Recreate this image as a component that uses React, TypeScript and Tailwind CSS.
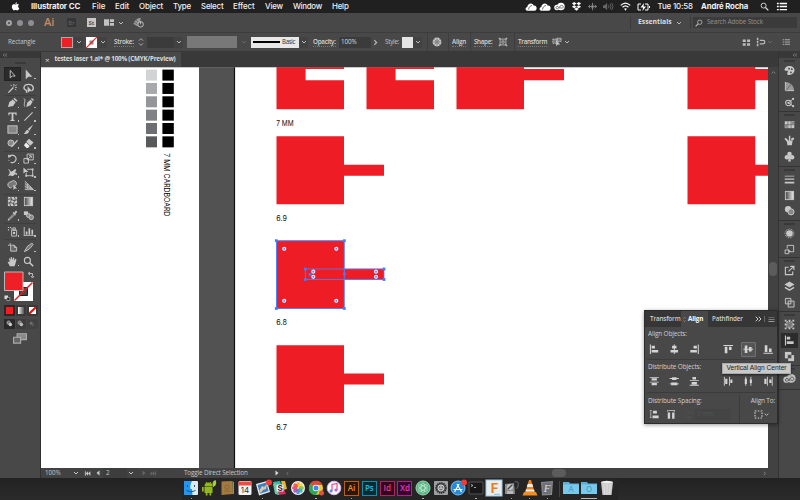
import React from "react";

const ui = "font-['Open_Sans','Noto_Sans',sans-serif]";

const glyphs: Record<string, React.ReactNode> = {
  select: <path d="M3.5 1.5v8.2l2.2-2h3.2z" fill="none" stroke="currentColor" />,
  direct: <path d="M3 .5v10.6l2.9-2.700h4.300z" />,
  wand: <><path d="M1.5 10.5L7 5" stroke="currentColor" strokeWidth="1.5" /><path d="M7.5 1v3M10.8 5h-2M4 2l1.2 1.4M9 3.4l1.5-1.6M8.8 6.5l1.3 1.4" stroke="currentColor" /></>,
  lasso: <><path d="M4 8C-.5 7.500.3 1.500 6 1.500s6.500 5 3.500 7M3 7.500c1.500.5 1 2 .5 3" fill="none" stroke="currentColor" strokeWidth="1.500" /><path d="M5 3.500V11l2-2h3z" /></>,
  pen: <><path d="M1 11l1.600-5.500L6.400 2.700l3 3-2.700 4z" /><path d="M7 2l1.300-1.300L11.500 4l-1.300 1.200z" /></>,
  curve: <><path d="M3.500 11l1.200-5 3.500-3 2.300 2.300-2.300 3.700zM8.700 2.200l1-1.200L12 3.400l-1 1z" /><path d="M1 1.500c3 2-1 6 1 9" fill="none" stroke="currentColor" /></>,
  type: <path d="M1.500 1.500h9v3h-1L9 2.900H7v6.600l1.300.4v.9H3.700v-.9L5 9.500V2.900H3l-.5 1.600h-1z" />,
  line: <path d="M1.500 10.500l9-9" stroke="currentColor" strokeWidth="1.200" />,
  rect: <rect x="1" y="2" width="10" height="8" fill="#858585" stroke="currentColor" />,
  brush: <><path d="M11.200.6L5.300 5.500l1.700 1.800z" /><path d="M5 6.200l1.600 1.600C6 11 3.500 10.800.8 10.800 3 9 2.500 7 5 6.200z" /></>,
  shaper: <><circle cx="4.300" cy="5.500" r="3.300" fill="#8a8a8a" stroke="currentColor" /><path d="M5 8.500L11 2l1 1-6 6.500-1.800.6z" /></>,
  eraser: <><path d="M6.500.8l5 4L8 8.500 3.500 4.200z" /><path d="M3.300 5l4 3.700-1.800 2.100H3.800L1 8z" fill="#eee" /></>,
  rotate: <><path d="M3 3.500a4 4 0 1 1 1 6.500" fill="none" stroke="currentColor" strokeWidth="1.300" /><path d="M1 1.500l.5 4 3.300-2z" /><path d="M2 7.500l.2 1" stroke="currentColor" strokeDasharray="1 1" /></>,
  scale: <><path d="M1 6h5v5H1zM4.500 1.200h6.700v6.300H4.500z" fill="none" stroke="currentColor" /><path d="M5 7.200l4-4M6.500 3H9v2.500" fill="none" stroke="currentColor" /></>,
  width: <path d="M1 2.500c3-1 2 3 4 2.500 2-.6 3-3 4.500-2.500C11 3 9 5 8.500 6c2 0 3 1 2.500 3-1.500-2-3-.5-4 .5C5 11 4 8 1 10l2-3.500C2.500 5 3 4 1 2.500z" />,
  transform: <><path d="M4.500 2.500h6v7h-7V6" fill="none" stroke="currentColor" /><path d="M.5.500v6.500l2-1.500h3.500zM9.500 1.500h2v2h-2zM9.500 8.500h2v2h-2zM2.500 8.500h2v2h-2z" /></>,
  shape: <><path d="M5 8.500A3.300 3.300 0 1 1 4.500 2a3.200 3.200 0 1 1 3.400 5" fill="#777" stroke="currentColor" /><path d="M7 5v6l1.700-1.700h2.300z" /></>,
  perspective: <><path d="M2 1l9 8.500v1H2z" fill="#777" /><path d="M2 1l9.500 9.500H2M2 4l9 6.500M2 7l9 3.500M5 4v6M8 7v3" fill="none" stroke="currentColor" strokeWidth=".8" /></>,
  mesh: <><path d="M1 1h10v10H1z" /><path d="M1 4c3-3 5 3 10 0M1 8c4-3 6 3 10 0M4 1c3 4-3 6 0 10M8 1c3 4-3 6 0 10" fill="none" stroke="#454545" /></>,
  gradient: <><defs><linearGradient id="grey"><stop stopColor="#444" /><stop offset="1" stopColor="#eee" /></linearGradient></defs><rect x="1.500" y="1.500" width="9" height="9" fill="url(#grey)" stroke="currentColor" /></>,
  dropper: <><path d="M7 4.500l-5 5-.8 1.700L3 10.500l5-5" fill="none" stroke="currentColor" /><path d="M6 3l1-.8 1 .8 1-1.700c1.300-1 2.500.2 1.600 1.600L9 4.300l.8.800-1 1z" /></>,
  blend: <><rect x="1" y="1.500" width="4.500" height="4" /><circle cx="6" cy="6" r="2.200" fill="#888" stroke="currentColor" /><circle cx="9" cy="8" r="2.500" fill="#888" stroke="currentColor" /></>,
  spray: <><path d="M5 4.500h5.500V11H5zM6.500 2h2.600v2.500H6.500z" fill="none" stroke="currentColor" /><circle cx="7.700" cy="7.600" r="1.400" /><path d="M1 1h1.300v1.300H1zM3.300 1h1.300v1.300H3.300zM1 3.600h1.300v1.300H1zM4 2.600h2v1H4z" /></>,
  graph: <path d="M.8 1h1v9h10v1H.8zM3 6h1.800v3.500H3zM6 2.500h1.800v7H6zM9.200 4H11v5.500H9.200z" />,
  artboard: <path d="M3.500 1v3M1 3.500h2M4 3.500h4l2.500 2.500v4H4zM8 3.500V6h2.500" fill="#666" stroke="currentColor" />,
  slice: <path d="M9.500 1L11 2.800 8 6.500 6.500 8 1.500 10.500 5 4.500 7.500 3z" fill="#777" stroke="currentColor" />,
  hand: <path d="M3 11.300C2.500 8.800.6 7.700.8 6.300c.9-.5 1.500.3 2.100.9L2.200 2.800c1-.7 1.500.2 1.900 2.700L4 1.500c1-.9 1.800 0 1.800 3.500L6.600 1.700c1.200-.5 1.600.3 1.200 3.600L9.200 3c1-.2 1.200.7 1 1.500L9 9l-.8 2.300z" />,
  zoom: <><circle cx="4.800" cy="4.800" r="3.300" fill="none" stroke="currentColor" strokeWidth="1.200" /><path d="M7.300 7.300l3.800 3.900" stroke="currentColor" strokeWidth="1.700" /></>,
  palette: <path fillRule="evenodd" d="M6.500 1.200C3 1 .3 3.500.7 5.700c.5 1.500 2.900 0 3.500.9.600 1-1.700 2.600-.2 3.900C7 12 11.800 9 11.500 5.200 11 2.500 8.500 1.300 6.500 1.200zM5.500 3a1 1 0 1 1 0 2 1 1 0 0 1 0-2zM8.500 3.500a1 1 0 1 1 0 2 1 1 0 0 1 0-2zM7.500 7a1 1 0 1 1 0 2 1 1 0 0 1 0-2z" />,
  guide: <><path d="M1.500 1c5 0 9.500 4 9.500 9.500H1.500z" fill="#999" /><path d="M1.500 1v9.500H11" fill="none" stroke="currentColor" /><path d="M2 10.500l6-7" stroke="#666" /></>,
  themes: <><circle cx="4.800" cy="6.500" r="3" fill="none" stroke="currentColor" strokeWidth="1.200" /><path d="M4.800 6.500L10 2M4.800 6.500L10 10" stroke="currentColor" /><circle cx="10" cy="2" r="1.200" /><circle cx="10" cy="10" r="1.200" /><circle cx="4.800" cy="6.500" r="1.200" /></>,
  swatches: <><path d="M.8 2.500h10.400v7.500H.8z" /><path d="M4.300 2.500V10M7.700 2.500V10M1 6.200h10" stroke="#555" strokeWidth=".7" /><path d="M8 3h3v3H8zM1 6.500h3v3H1z" fill="#888" /></>,
  brushes: <><path d="M3 6.200h6.300l-.7 5H3.700zM5.300.8h1.600v5.700H5.300zM7.500 4l3-1.500.5 2-2.500 2z" /><path d="M1.200 3.800l3.300 3.500" stroke="currentColor" strokeWidth="2" /></>,
  club: <><circle cx="6" cy="3.300" r="2.500" /><circle cx="3.200" cy="6.900" r="2.500" /><circle cx="8.800" cy="6.900" r="2.500" /><path d="M5.500 5h1l1 6.500h-3z" /></>,
  lines: <path d="M.8 2h10.400v.8H.8zM.8 5h10.400v1.300H.8zM.8 8.500h10.400v1.800H.8z" />,
  transparency: <><circle cx="4.500" cy="4.500" r="3.500" /><circle cx="7.700" cy="7.500" r="3.300" fill="#888" stroke="currentColor" /></>,
  appearance: <><circle cx="6" cy="6" r="3.600" /><circle cx="6" cy="6" r="4.800" fill="none" stroke="currentColor" strokeDasharray="1 1" /></>,
  styles: <><path d="M3.500 5V1.500h7v7H7" fill="none" stroke="currentColor" /><path d="M1.200 6.500h4v4h-4z" fill="none" stroke="currentColor" /><path d="M4 5.500l4 3-2.500.5z" /></>,
  exporting: <><path d="M5 2.500H1.500v8h8V7" fill="none" stroke="currentColor" strokeWidth="1.200" /><path d="M5 7l5-5M6.800 1.500h4v4" fill="none" stroke="currentColor" strokeWidth="1.300" /></>,
  layers: <><path d="M6 .5l5.500 3.200L6 7 .5 3.700z" /><path d="M1 7l5 3 5-3" fill="none" stroke="currentColor" strokeWidth="1.600" /></>,
  boards: <path d="M1.500 1.500h6v6h-6zM4.500 4.500H11V11H4.500z" fill="#555" stroke="currentColor" />,
  pathfinder: <><path d="M1 1h7v7H1z" /><path d="M4.500 4.500H11V11H4.500z" /><path d="M4.300 4.300h3.500v3.500H4.300z" fill="#484848" stroke="#777" strokeWidth=".6" /></>,
  bounds: <><path d="M3 3h6v6H3z" fill="#777" stroke="currentColor" strokeDasharray="1.500 1" /><path d="M.8.800h2v2h-2zM5 .8h2v2H5zM9.200.800h2v2h-2zM.8 5h2v2h-2zM9.200 5h2v2h-2zM.8 9.200h2v2h-2zM5 9.200h2v2H5zM9.200 9.200h2v2h-2z" /></>,
  left: <path d="M1 .5h1.200v11H1zM3 2h3.800v3H3zM3 6.800h7.500v3H3z" />,
  hcenter: <path d="M5.500.500h1.100v11H5.500zM3.500 2h5v3h-5zM1.800 6.800h8.500v3H1.800z" />,
  right: <path d="M10 .5h1.200v11H10zM5.200 2H9v3H5.200zM1.500 6.800H9v3H1.500z" />,
  top: <path d="M.5 1h11v1.200H.5zM2 3h3v7.500H2zM6.800 3h3v3.800h-3z" />,
  vcenter: <path d="M.5 5.500h11v1.100H.5zM2 1.800h3v8.500H2zM6.800 3.500h3v5h-3z" />,
  bottom: <path d="M.5 10h11v1.200H.5zM2 1.500h3V9H2zM6.800 5.200h3V9h-3z" />,
  dtop: <path d="M.8 1h10.400v1H.8zM3 2.500h6V5H3zM.8 6.500h10.400v1H.8zM3 8h6v2.500H3z" />,
  dmid: <path d="M3.500 1.300h5v3.200h-5zM.8 2.400h10.400v1H.8zM2.500 7.300h7v3.200h-7zM.8 8.500h10.400v1H.8z" />,
  dbot: <path d="M4 1.200h4V4H4zM.8 4.500h10.400v1H.8zM3 6.800h6v2.800H3zM.8 10h10.400v1H.8z" />,
  dleft: <path d="M1 .8h1v10.400H1zM2.500 3h2.500v6H2.500zM7 .8h1v10.400H7zM8.400 4h2.300v4H8.400z" />,
  dcent: <path d="M2.700.800h1v10.400h-1zM2 3h2.500v6H2zM8.500.800h1v10.400h-1zM7.800 4h2.400v4H7.800z" />,
  dright: <path d="M4.500.800h1v10.400h-1zM1.500 3H4v6H1.500zM10 .8h1v10.400h-1zM7.200 4h2.400v4H7.200z" />,
  vspace: <path d="M4.500 2H9v3H4.500zM4 7.500h7v3H4zM1 1.500h2v1H1zM1 9h2v1H1zM1.700 3h.8v6h-.8z" />,
  hspace: <path d="M2 4h2.700v7H2zM7 4h2.700v7H7zM1.500 1h1v2h-1zM9 1h1v2H9zM3 1.500h6v.8H3z" />,
  shapeprops: <><rect x="2.500" y="2.500" width="7" height="7" fill="#555" stroke="currentColor" /><path d="M1 1l2 2M11 1L9 3M1 11l2-2M11 11L9 9" stroke="currentColor" strokeWidth="1.500" /><circle cx="6" cy="6" r="1.500" fill="none" stroke="currentColor" /></>,
  globe: <><circle cx="6" cy="6" r="5.300" /><circle cx="6" cy="6" r="2.500" fill="none" stroke="#666" strokeWidth=".6" /><path d="M6 1v10M1 6h10M2.500 2.500l7 7M9.500 2.500l-7 7" stroke="#666" strokeWidth=".6" /></>,
  isolate: <><path d="M1 2.500h5v5H1zM6 1.500h5v4H6z" fill="#777" stroke="currentColor" strokeDasharray="2 .7" /><path d="M5 4v7l2-2h3z" /></>,
  grid: <path d="M1 2h4v3.300H1zM6.800 2h4v3.300h-4zM1 7h4v3.300H1zM6.800 7h4v3.300h-4z" />,
  snap: <><path d="M1 1h1.800v3H1zM1 4.800h1.800v2.700H1zM1 8.300h1.800V11H1z" /><path d="M4.500 4H8.500a2 2 0 0 1 0 4.200h-4" fill="none" stroke="currentColor" strokeWidth="1.500" /></>,
  rocket: <><path d="M.5 7.500C2 3 5 1 8.500 1L7 8 5 10z" fill="#999" /><path d="M1 5l4 3M3 3l4 4" stroke="#666" /><circle cx="8.300" cy="8" r="3" fill="#484848" stroke="currentColor" /><path d="M8.300 4.500V8" stroke="currentColor" /></>,
  cloud: <><path d="M2.500 9.800C-.2 9.500.2 6.300 2.300 6c.2-4 5.400-4.800 6.300-1.500 3.600-.4 4.200 4.700.8 5.300z" /><path d="M3.500 8.500C4 6 5 5 7 4.500" fill="none" stroke="#333" strokeWidth=".7" /></>,
  cc: <><circle cx="7.600" cy="5.900" r="4.100" /><circle cx="3.200" cy="7.100" r="2.900" /><path d="M6.800 8.400L4.700 6.300C3.300 5.200 1.600 6.800 2.300 7.900c.8 1.100 2.200.6 3-.4L7 5.300C8.300 3.900 10.600 5.100 10 6.900 9.300 8.500 7.900 7.900 6.900 6.700" fill="none" stroke="#444" strokeWidth=".8" /></>,
  dropbox: <path d="M3.500 1L6 2.700 3.500 4.500 1 2.700zM8.500 1L11 2.700 8.500 4.500 6 2.700zM1 6.200l2.500-1.700L6 6.200 3.500 8zM6 6.200l2.500-1.700L11 6.200 8.500 8zM3.500 8.600L6 7l2.500 1.600L6 10.500z" />,
  sync: <><path d="M.5 6h11M3 3.500L.5 6 3 8.500M9 3.500L11.500 6 9 8.500M6 1v10" fill="none" stroke="currentColor" strokeWidth="1.200" /><circle cx="6" cy="6" r="2" /></>,
  volume: <><path d="M0 4.500h2L4.500 2v8L2 7.500H0z" /><path d="M6 4.500q1 1.500 0 3M7.700 3q2 3 0 6M9.500 2q3 4 0 8" fill="none" stroke="currentColor" /></>,
  wifi: <><path d="M.8 4.800Q6-.3 11.200 4.800M2.800 6.800q3.200-3 6.400 0" fill="none" stroke="currentColor" strokeWidth="1.300" /><path d="M4.500 8.500Q6 7.200 7.500 8.500L6 10.500z" /></>,
  list: <path d="M1 2h2v1.500H1zM4 2h8v1.500H4zM1 5.300h2v1.500H1zM4 5.300h8v1.500H4zM1 8.600h2v1.500H1zM4 8.600h8v1.500H4z" />,
  down: <path d="M3 4.500L6 7.500l3-3" fill="none" stroke="currentColor" strokeWidth="1.500" />,
  next: <path d="M4.500 3l3 3-3 3" fill="none" stroke="currentColor" strokeWidth="1.500" />,
  stepper: <path d="M3 4l3-3 3 3M3 8l3 3 3-3" fill="none" stroke="currentColor" strokeWidth="1.300" />,
  dblleft: <path d="M5 3L2.500 6 5 9M9.500 3L7 6l2.500 3" fill="none" stroke="currentColor" strokeWidth="1.400" />,
  dblright: <path d="M2.500 2.500L6 6 2.500 9.500M7 2.500L10.500 6 7 9.500" fill="none" stroke="currentColor" strokeWidth="1.500" />,
  first: <path d="M1.500 2H3v8H1.500zM11 2v8L7 6v4L3 6l4-4v4z" />,
  prev: <path d="M9 1v10L3 6z" />,
  play: <path d="M3 1v10L9 6z" />,
  last: <path d="M9 2h1.500v8H9zM1 2v8l4-4v4l4-4-4-4v4z" />,
  screens: <><path d="M3.500 1.500h8v5h-8z" fill="#888" stroke="currentColor" /><path d="M.5 4.500h6v5h-6z" fill="#666" stroke="currentColor" /></>,
  mode: <><circle cx="4.500" cy="4.500" r="3" fill="#777" stroke="currentColor" /><circle cx="7.500" cy="7.500" r="3" /></>,
  apple: <path d="M8 .3c.2 1.400-1 2.400-2.100 2.400C5.700 1.500 6.800.4 8 .3zM6 3.400c.7 0 1.500-.7 2.700-.6.800 0 1.500.4 2 1-1.900 1.200-1.500 3.600.4 4.400-.5 1.400-1.500 3-2.500 3-.9 0-1.200-.5-2.300-.5s-1.500.5-2.300.5C2.500 11 .3 7 1.400 4.700c1-2.200 3.100-2 4.600-1.300z" />,
};

function Icon({ name, className = "size-[11px] text-[#bdbdbd]" }: { name: string; className?: string }) {
  return <svg viewBox="0 0 12 12" fill="currentColor" className={`block shrink-0 ${className}`}>{glyphs[name]}</svg>;
}

function Cell({ className, children }: { className: string; children?: React.ReactNode }) {
  return <div className={`flex h-full shrink-0 items-center whitespace-nowrap ${className}`}>{children}</div>;
}

const Link = ({ children }: { children: string }) => (
  <span className="border-b border-dotted border-[#787878] pb-px leading-[7px] text-[#d4d4d4]">{children}</span>
);

const Sep = () => <div className="h-[19px] w-px shrink-0 bg-[#3d3d3d]" />;
const Chev = ({ dim = false }: { dim?: boolean }) => (
  <div className={`flex h-[11px] w-[9px] shrink-0 items-center justify-center ${dim ? "" : "bg-[#424242]"}`}>
    <Icon name="down" className={dim ? "size-2 text-[#666]" : "size-2 text-[#bbb]"} />
  </div>
);

function MenuBar() {
  return (
    <header className="flex h-[13px] items-center bg-[#202020] font-['Inter',sans-serif] text-[7.9px] font-medium text-[#f0f0f0]">
      <Cell className="w-[31px] pl-[11px]"><Icon name="apple" className="size-[9px] text-white" /></Cell>
      <Cell className="w-[61px] text-[7.9px] font-bold tracking-[-0.12px]">Illustrator CC</Cell>
      <Cell className="w-[23px]">File</Cell>
      <Cell className="w-[24px]">Edit</Cell>
      <Cell className="w-[34px] tracking-[-0.1px]">Object</Cell>
      <Cell className="w-[28px] tracking-[-0.2px]">Type</Cell>
      <Cell className="w-[32px] tracking-[-0.2px]">Select</Cell>
      <Cell className="w-[32px] tracking-[-0.1px]">Effect</Cell>
      <Cell className="w-[28px] tracking-[-0.2px]">View</Cell>
      <Cell className="w-[39px] tracking-[-0.3px]">Window</Cell>
      <Cell className="w-[193px] tracking-[-0.2px]">Help</Cell>
      <Cell className="w-[14px]"><Icon name="cloud" className="size-[12px] text-white" /></Cell>
      <Cell className="w-[15px]"><Icon name="cloud" className="size-[12px] text-white" /></Cell>
      <Cell className="w-[17px]"><Icon name="cc" className="size-[11px] text-white" /></Cell>
      <Cell className="w-[17px]"><Icon name="dropbox" className="size-[11px] text-white" /></Cell>
      <Cell className="w-[15px]"><Icon name="sync" className="size-[9px] text-[#888]" /></Cell>
      <Cell className="w-[17px]"><Icon name="volume" className="size-[11px] text-[#666]" /></Cell>
      <Cell className="w-[17px]"><Icon name="wifi" className="size-[11px] text-white" /></Cell>
      <Cell className="w-[20.500px]">
        <svg viewBox="0 0 13 8" className="h-2 w-[13px]" fill="white"><path d="M4 1H1v6h3M8 1h3v6H8" fill="none" stroke="white" /><path d="M7 0L3.500 4.500H6L5.500 8 9 3.500H6.500zM12 3h1v2h-1z" /></svg>
      </Cell>
      <Cell className="w-[43.500px] tracking-[-0.15px]">Tue 10:58</Cell>
      <Cell className="w-[59px] text-[7.8px] font-bold tracking-[-0.15px]">André Rocha</Cell>
      <Cell className="w-[16px]"><Icon name="zoom" className="size-[9px] text-[#ddd]" /></Cell>
      <Cell className="w-[12px]"><Icon name="list" className="size-[11px] text-white" /></Cell>
    </header>
  );
}

function AppBar() {
  return (
    <div className={`flex h-[19px] items-center bg-[#484848] text-[6.5px] ${ui}`}>
      <Cell className="w-[44px] gap-[5px] pl-[5.500px]">
        <i className="flex size-[6px] items-center justify-center rounded-full bg-[#a4a3aa]"><b className="size-[2px] rounded-full bg-[#444]" /></i>
        <i className="size-[6px] rounded-full bg-[#8e8d94]" />
        <i className="size-[6px] rounded-full bg-[#8e8d94]" />
      </Cell>
      <Cell className="w-[23px] pb-[2px] text-[11px] font-semibold text-[#c98a62]">Ai</Cell>
      <Cell className="w-[20px]"><span className="flex h-[9px] w-[9px] items-center justify-center bg-[#363636] text-[6px] text-[#686868]">Br</span></Cell>
      <Cell className="w-[17px]"><span className="flex h-[9px] w-[9px] items-center justify-center bg-[#c8c8c8] text-[6px] font-bold text-[#555]">St</span></Cell>
      <Cell className="w-[13px]"><svg viewBox="0 0 12 8" className="h-[7px] w-[10px]" fill="#c2c2c2"><path d="M0 0h6v8H0zM7 0h5v3.500H7zM7 4.500h5V8H7z" /></svg></Cell>
      <Cell className="w-[16px]"><Icon name="down" className="size-2 text-[#bbb]" /></Cell>
      <Cell className="w-[497px]"><Icon name="rocket" className="size-[11px] text-[#ccc]" /></Cell>
      <div className="h-3 w-px bg-[#3a3a3a]" />
      <Cell className="w-[44px] pl-[7px] text-[6.8px] font-bold text-[#dedede]">Essentials</Cell>
      <Cell className="w-[15px]"><Icon name="down" className="size-2 text-[#bbb]" /></Cell>
      <div className="h-3 w-px bg-[#3a3a3a]" />
      <div className="ml-[2px] flex h-[11px] w-[104px] items-center bg-[#3b3b3b] pl-[2px] text-[6.3px] tracking-[-0.12px] text-[#949494]">
        <Icon name="zoom" className="mr-[4px] size-2 -scale-x-100 text-[#bbb]" />Search Adobe Stock
      </div>
    </div>
  );
}

function ControlBar() {
  return (
    <div className={`flex h-[19px] items-center border-t border-[#3d3d3d] bg-[#484848] text-[6.3px] text-[#c4c4c4] ${ui}`}>
      <Cell className="w-[60px] pl-[8px] tracking-[-0.13px]">Rectangle</Cell>
      <Cell className="w-[26px]"><i className="ml-[1px] mr-[1px] h-[11px] w-[12px] border border-[#aaa] bg-[#ee2026]" /><Chev /></Cell>
      <Cell className="w-[28px]">
        <svg viewBox="0 0 11 11" className="mr-[1px] size-[11px]"><path d="M0 0h11v11H0z" fill="white" /><path d="M3.500 3.500h4v4h-4z" fill="#888" /><path d="M0 11L11 0" stroke="#e22" strokeWidth="1.200" /></svg><Chev />
      </Cell>
      <Cell className="w-[23px] font-semibold tracking-[-0.25px]"><Link>Stroke:</Link></Cell>
      <Cell className="w-[10px]"><Icon name="stepper" className="size-2 text-[#bbb]" /></Cell>
      <Cell className="w-[40px]"><i className="h-[11px] w-[27px] bg-[#3b3b3b]" /><Chev /></Cell>
      <Cell className="w-[64px]"><i className="mr-[2px] h-[12px] w-[50px] bg-[#787878]" /><Chev dim /></Cell>
      <Cell className="w-[62px]">
        <div className="flex h-[11px] w-[48px] items-center bg-[#e8e8e8] pl-[2px] text-[6.200px] tracking-[-0.35px] text-[#333]"><i className="mr-[2px] h-[1.500px] w-[27px] shrink-0 bg-black" />Basic</div><Chev />
      </Cell>
      <Cell className="w-[26px] font-semibold tracking-[-0.3px]"><Link>Opacity:</Link></Cell>
      <Cell className="w-[46px]"><div className="flex h-[11px] w-[32px] items-center bg-[#3b3b3b] pl-[2px] tracking-[-0.1px] text-[#ddd]">100%</div><Icon name="next" className="size-[9px] text-[#bbb]" /></Cell>
      <Cell className="w-[17px] tracking-[-0.25px]">Style:</Cell>
      <Cell className="w-[25px]"><i className="h-[11px] w-[11px] bg-[#e4e4e4]" /><Chev /></Cell>
      <Sep />
      <Cell className="w-[20px] pl-[4px]"><Icon name="globe" className="size-[10px] text-[#c8c8c8]" /></Cell>
      <Sep />
      <Cell className="w-[21px] pl-[3px] font-semibold tracking-[-0.2px]"><Link>Align</Link></Cell>
      <Sep />
      <Cell className="w-[26px] pl-[3px] font-semibold tracking-[-0.35px]"><Link>Shape:</Link></Cell>
      <Cell className="w-[17px] pl-[1px]"><Icon name="shapeprops" className="size-[10px] text-[#bbb]" /></Cell>
      <Sep />
      <Cell className="w-[37px] pl-[3px] font-semibold tracking-[-0.3px]"><Link>Transform</Link></Cell>
      <Cell className="w-[11px]"><Icon name="isolate" className="size-[10px]" /></Cell>
      <Icon name="down" className="size-2 text-[#bbb]" />
      <div className="flex-1" />
      <Cell className="w-[14px]"><Icon name="grid" className="size-[9px] text-[#bbb]" /></Cell>
      <Cell className="w-[10px]"><Icon name="snap" className="size-[10px] text-[#bbb]" /></Cell>
      <Cell className="w-[16px]"><Icon name="down" className="size-2 text-[#666]" /></Cell>
      <Cell className="w-[18px]"><Icon name="list" className="size-[8px] text-[#aaa]" /></Cell>
    </div>
  );
}

const toolGroups = [
  { h: "h-[14px]", gap: "", tools: [["select", "direct"], ["wand", "lasso"]] },
  { h: "h-[13.500px]", gap: "border-t", tools: [["pen", "curve"], ["type", "line"], ["rect", "brush"], ["shaper", "eraser"]] },
  { h: "h-[13.500px]", gap: "mt-px border-t", tools: [["rotate", "scale"], ["width", "transform"], ["shape", "perspective"]] },
  { h: "h-[13.500px]", gap: "mt-px border-t pt-[0.500px]", tools: [["mesh", "gradient"], ["dropper", "blend"]] },
  { h: "h-[14px]", gap: "mt-px border-t pt-[0.500px]", tools: [["spray", "graph"]] },
  { h: "h-[14px]", gap: "border-t pt-[0.500px]", tools: [["artboard", "slice"], ["hand", "zoom"]] },
];

const singleTools = ["select", "wand", "lasso", "mesh", "gradient", "blend", "artboard", "zoom"];

function ToolPanel() {
  return (
    <aside className="h-[426px] w-[41px] shrink-0 border-r border-[#303030] bg-[#484848]">
      <div className="flex h-[6px] items-center bg-[#383838] pl-[2px]"><Icon name="dblleft" className="size-[6px] text-[#999]" /></div>
      <div className="flex h-[9px] items-center justify-center"><i className="h-[2px] w-[11px] bg-[#3a3a3a]" /></div>
      <div className="px-[4px]">
        {toolGroups.map((g, n) => (
          <div key={n} className={`border-[#3e3e3e] ${g.gap}`}>
            {g.tools.map((row) => (
              <div key={row[0]} className={`flex ${g.h}`}>
                {row.map((t) => (
                  <div key={t} className={`flex w-[16.500px] shrink-0 items-center justify-center ${t === "select" ? "border border-[#222] bg-[#2b2b2b]" : ""}`}>
                    <Icon name={t} className="size-[11px] text-[#c8c8c8]" />
                    {!singleTools.includes(t) && <i className="-mr-[1.500px] mt-[9px] size-[1.500px] bg-[#bbb]" />}
                  </div>
                ))}
              </div>
            ))}
          </div>
        ))}
      </div>
      <svg viewBox="0 0 40 34" className="mt-[2px] block h-[34px] w-[40px]">
        <path d="M14 12h19v19H14z" fill="white" /><path d="M19.500 17.500h8v8h-8z" fill="#484848" stroke="#222" /><path d="M14.500 30.500L32.500 12.500" stroke="#f01818" strokeWidth="1.500" />
        <path d="M4.500 2h18.500v18.500H4.500z" fill="#ee2026" stroke="#b8b8b8" />
        <path d="M29 3.500h3.500v3M30 2l-2 1.500 2 1.500M31 6l1.500 2L34 6" fill="none" stroke="#bbb" />
        <path d="M4.500 25.500H8v3.500H4.500z" fill="#ddd" /><path d="M6.800 27.500h3v3h-3z" fill="#222" stroke="#ccc" strokeWidth=".6" />
      </svg>
      <div className="mt-[1px] flex h-[11px] gap-[1px] pl-[4px]">
        <i className="flex size-[10.500px] items-center justify-center bg-[#292929]"><b className="size-[6.500px] bg-[#f51c22]" /></i>
        <i className="flex size-[10.500px] items-center justify-center bg-[#393939]"><b className="size-[6.500px] bg-linear-to-r from-white to-[#555]" /></i>
        <i className="flex size-[10.500px] items-center justify-center bg-[#393939]"><svg viewBox="0 0 7 7" className="size-[7px]"><path d="M0 0h7v7H0z" fill="white" /><path d="M0 7l7-7" stroke="red" strokeWidth="2" /></svg></i>
      </div>
      <div className="mt-[2.500px] flex h-[11px] gap-[1px] pl-[4px]">
        <i className="flex size-[10.500px] items-center justify-center bg-[#292929]"><Icon name="mode" className="size-[7px] text-[#ccc]" /></i>
        <i className="flex size-[10.500px] items-center justify-center bg-[#3d3d3d]"><Icon name="mode" className="size-[7px] text-[#bbb]" /></i>
        <i className="flex size-[10.500px] items-center justify-center bg-[#424242]"><Icon name="mode" className="size-[6px] text-[#585858]" /></i>
      </div>
      <div className="mt-[2px] flex justify-center"><Icon name="screens" className="size-[14px] text-[#aaa]" /></div>
    </aside>
  );
}

const greys = ["#d1d3d4", "#a7a9ac", "#939598", "#808285", "#6d6e71", "#58595b"];
const selectedCorners = [[276.300, 240.700], [344.300, 240.700], [276.300, 308.500], [344.300, 308.500], [305.300, 269], [384, 269], [305.300, 279.500], [384, 279.500], [344.500, 274], [310, 274.500]];
const cornerWidgets = [[284.200, 248.800], [336.300, 248.800], [284.200, 300.800], [336.300, 300.800], [313.300, 271.700], [313.300, 276.800], [376, 271.700], [376, 276.800]];

function Artwork() {
  return (
    <svg viewBox="41 67 727 401" className="block h-[401px] w-[727px] shrink-0 font-['Inter',sans-serif]">
      <path d="M41 67h727v401H41z" fill="white" />
      <path d="M199 67h36v401h-36z" fill="#525252" />
      <path d="M234.500 67v401" stroke="#111" strokeWidth="1.200" />
      {greys.map((c, i) => (
        <g key={c}>
          <rect x="146" y={69.6 + i * 13.35} width="11" height="11" fill={c} />
          <rect x="162.400" y={69.6 + i * 13.35} width="11.400" height="11" />
        </g>
      ))}
      <text transform="translate(163.700 153.300) rotate(90)" fontSize="7.700" textLength="63" lengthAdjust="spacingAndGlyphs">7 MM CARDBOARD</text>
      <g fill="#ee1c25">
        <path d="M276.500 67H344v2h-38.400v11.300H344v28.900h-67.500z" />
        <path d="M366.500 67H434v2h-38.400v11.300H434v28.900h-67.500z" />
        <path d="M456.500 67H524v2h40v11.300h-40v28.900h-67.500z" />
        <path d="M687.500 67h67.800v2H768v11.300h-12.700v28.900h-67.800z" />
        <path d="M687.500 136.300h67.800v28.400H768v11h-12.700v28.500h-67.800z" />
        <path d="M276.500 136.300H344v28.400h40v11h-40v28.500h-67.500z" />
        <path d="M276.500 240.800H344v28h40v11h-40v28.600h-67.500z" />
        <path d="M276.500 345.300H344v28.200h40v11h-40V413h-67.500z" />
      </g>
      <path d="M41 67.300h727" stroke="#777" strokeWidth=".7" opacity=".7" />
      <g fontSize="7.800" fill="#111">
        <text x="276.300" y="126.400" textLength="17.300" lengthAdjust="spacingAndGlyphs">7 MM</text>
        <text x="276.300" y="220.500" textLength="10.500" lengthAdjust="spacingAndGlyphs">6.9</text>
        <text x="276.300" y="325.300" textLength="10.500" lengthAdjust="spacingAndGlyphs">6.8</text>
        <text x="276.300" y="429.800" textLength="10.500" lengthAdjust="spacingAndGlyphs">6.7</text>
      </g>
      <g fill="none" stroke="#4f80ff">
        <rect x="276.500" y="240.700" width="67.800" height="67.800" />
        <rect x="305.300" y="269" width="78.700" height="10.500" strokeWidth=".8" />
      </g>
      {selectedCorners.map(([x, y], i) => <rect key={i} x={x - 1.4} y={y - 1.4} width="2.800" height="2.800" fill="#3f7dff" />)}
      {cornerWidgets.map(([x, y], i) => <circle key={i} cx={x} cy={y} r="1.500" fill="#4f80ff" stroke="#dce6ff" strokeWidth="1.200" />)}
    </svg>
  );
}

const panelGroups = [
  { pad: "pt-[5px] h-[54px]", items: ["palette", "guide", "themes"] },
  { pad: "pt-[5px] h-[54.500px]", items: ["swatches", "brushes", "club"] },
  { pad: "pt-[5px] h-[54px]", items: ["lines", "gradient", "transparency"] },
  { pad: "pt-[5px] h-[37.500px]", items: ["appearance", "styles"] },
  { pad: "pt-[5px] h-[54px]", items: ["exporting", "layers", "boards"] },
  { pad: "pt-[5px] h-[54px]", items: ["bounds", "left", "pathfinder"] },
  { pad: "pt-[5px] h-[24px]", items: ["cc"] },
];

function IconDock() {
  return (
    <aside className="h-[426px] w-[22px] shrink-0 border-l border-[#343434] bg-[#484848]">
      <div className="flex h-[6px] items-center justify-end bg-[#383838] pr-[2px]"><Icon name="dblleft" className="size-[6px] text-[#999]" /></div>
      {panelGroups.map((g, n) => (
        <div key={n} className={`flex flex-col items-center border-b border-[#343434] ${g.pad}`}>
          <i className="-mt-[3px] mb-px h-[2px] w-[11px] shrink-0 bg-[#393939]" />
          {g.items.map((name) => (
            <div key={name} className={`flex h-[15.700px] w-[17px] shrink-0 items-center justify-center ${name === "left" ? "bg-[#2c2c2c]" : ""}`}>
              <Icon name={name} className={name === "cc" ? "size-[13px] text-[#c2c2c2]" : "size-[11px] text-[#c8c8c8]"} />
            </div>
          ))}
        </div>
      ))}
    </aside>
  );
}

function AlignButton({ name, active = false }: { name: string; active?: boolean }) {
  return <div className={`flex h-[15px] w-[15px] shrink-0 items-center justify-center ${active ? "rounded-[1px] border border-[#707070] bg-[#555]" : ""}`}><Icon name={name} className="size-[10.500px] text-[#d4d4d4]" /></div>;
}

function ButtonRow({ a, b }: { a: string[]; b: string[] }) {
  return (
    <div className="flex h-[15px] items-center justify-between pl-[1.500px] pr-[1.500px]">
      <div className="flex gap-[5px]">{a.map((n) => <AlignButton key={n} name={n} />)}</div>
      <div className="flex gap-[5px]">{b.map((n) => <AlignButton key={n} name={n} active={n === "vcenter"} />)}</div>
    </div>
  );
}

function AlignPanel() {
  return (
    <section className={`absolute left-[644px] top-[310px] h-[114px] w-[134px] border border-[#2c2c2c] bg-[#484848] text-[6.400px] font-medium tracking-[-0.12px] text-[#d0d0d0] shadow-[0_1px_4px_#0006] ${ui}`}>
      <div className="flex h-[16px] items-center bg-[#363636] text-[6.300px] font-semibold tracking-[-0.15px]">
        <Cell className="w-[36px] pl-[5px]">Transform</Cell>
        <Cell className="w-[27px] bg-[#484848] pl-[1px] font-bold text-white"><Icon name="stepper" className="mr-[1px] size-[5px] text-[#aaa]" />Align</Cell>
        <Cell className="w-[46px] pl-[4px]">Pathfinder</Cell>
        <Icon name="dblright" className="size-[8px] text-[#ccc]" />
        <i className="mx-[2px] h-[6px] w-px bg-[#666]" />
        <Icon name="lines" className="ml-px size-[7px] text-[#999]" />
      </div>
      <div className="flex h-[15px] items-center pl-[3px]">Align Objects:</div>
      <ButtonRow a={["left", "hcenter", "right"]} b={["top", "vcenter", "bottom"]} />
      <div className="mx-[2px] mt-[2px] flex h-[15px] items-center border-t border-[#3b3b3b] pl-px pt-px">Distribute Objects:</div>
      <ButtonRow a={["dtop", "dmid", "dbot"]} b={["dleft", "dcent", "dright"]} />
      <div className="mx-[2px] mt-[3px] flex h-[33px] border-t border-[#3b3b3b]">
        <div className="my-[2px] w-[93px] border-r border-[#3b3b3b] pl-px">
          <div className="-mt-px flex h-[14px] items-center">Distribute Spacing:</div>
          <div className="-ml-px -mt-px flex items-center gap-[2px]">
            <AlignButton name="vspace" /><AlignButton name="hspace" />
            <Icon name="stepper" className="ml-[4px] size-[8px] text-[#585858]" />
            <div className="flex h-[11px] w-[36px] items-center bg-[#444] pl-[2px] text-[#545454]">0 mm</div>
          </div>
        </div>
        <div className="flex-1 pl-[11px] pt-px">
          <div className="flex h-[14px] items-center whitespace-nowrap">Align To:</div>
          <div className="flex h-[13px] items-center pl-[3px]">
            <svg viewBox="0 0 9 9" className="size-[9px]"><path d="M1 1h7v7H1z" fill="none" stroke="#ccc" strokeDasharray="1.500 1.300" strokeWidth="1.200" /></svg>
            <Icon name="down" className="size-[7px] text-[#ccc]" />
          </div>
        </div>
      </div>
      <div className="absolute left-[77px] top-[52px] flex h-[11px] w-[69px] items-center justify-center whitespace-nowrap border border-[#aaa] bg-[#c9c9c9] font-['Liberation_Sans',sans-serif] text-[6.700px] font-normal tracking-normal text-[#222] shadow-[0_1px_2px_#0008]">Vertical Align Center</div>
    </section>
  );
}

function StatusBar() {
  return (
    <div className={`flex h-[10px] items-center bg-[#424242] text-[6.300px] tracking-[-0.13px] text-[#c8c8c8] ${ui}`}>
      <Cell className="w-[31px] pl-[4px]">100%</Cell>
      <Cell className="w-[12px]"><Icon name="down" className="size-[8px]" /></Cell>
      <Cell className="w-[11px]"><Icon name="first" className="size-[7px] text-[#ccc]" /></Cell>
      <Cell className="w-[8px]"><Icon name="prev" className="size-[6px] text-[#ccc]" /></Cell>
      <Cell className="w-[24px] bg-[#3d3d3d] pl-[3px]">2</Cell>
      <Cell className="w-[14px]"><Icon name="down" className="size-[8px]" /></Cell>
      <Cell className="w-[9px]"><Icon name="play" className="size-[6px] text-[#666]" /></Cell>
      <Cell className="w-[34px]"><Icon name="last" className="size-[7px] text-[#666]" /></Cell>
      <Cell className="w-[90px]">Toggle Direct Selection</Cell>
      <Cell className="w-[10px]"><Icon name="play" className="size-[6px] text-[#ddd]" /></Cell>
      <Icon name="next" className="size-[7px] rotate-180 text-[#777]" />
      <div className="ml-[261px] h-[8px] w-[14px] rounded-full bg-[#5c5c5c]" />
      <div className="flex-1" />
      <Icon name="next" className="mr-[10px] size-[7px] text-[#888]" />
    </div>
  );
}

function Tile({ label, className }: { label: string; className: string }) {
  return <div className={`flex size-[15px] items-center justify-center border text-[8px] font-semibold ${ui} ${className}`}>{label}</div>;
}

const Svg = ({ children }: { children: React.ReactNode }) => <svg viewBox="0 0 16 16" className="size-[16px] overflow-visible">{children}</svg>;
const Badge = () => <circle cx="14" cy="2.500" r="3" fill="#f03b35" />;
const petals = ["#f7a521", "#f3d43a", "#8cc63f", "#3cb6a0", "#4a8bd6", "#8d62b5", "#d94b8a", "#ee5538"];

const dockItems: { icon: React.ReactNode; running?: boolean }[] = [
  { running: true, icon: <Svg><rect x="1" y="1" width="14" height="14" rx="1" fill="#dcecf6" /><path d="M1 1h8c-1.500 3-2 5-1.500 8H9l.5 6H1z" fill="#2397f0" /><path d="M4.500 5v2M11.500 5v2M3.500 10.500q4.500 3 9 0" fill="none" stroke="#174a73" strokeWidth=".9" /></Svg> },
  { icon: <Svg><path d="M3.500 6.500h8V13h-8zM3.500 6a4 3.500 0 0 1 8 0zM1 7h1.700v4.500H1zM4.800 12h1.700v3.500H4.800zM8.500 12h1.700v3.500H8.500z" fill="#92b81e" /><path d="M12 7c-1-3-.5-6 2.500-7C16 3 15 6 12 7z" fill="#a7ce37" /><path d="M5 2l1 1.500M10 2L9 3.500" stroke="#92b81e" /></Svg> },
  { icon: <Svg><path d="M2.500 1.500l11-.5.5 13-11.500 1z" fill="#a47a43" /><path d="M13.500 1.500L15 2v12l-1 .3z" fill="#65a268" /><circle cx="8" cy="7" r="2.200" fill="none" stroke="#8a6434" /><path d="M5 11h6" stroke="#8a6434" /></Svg> },
  { icon: <Svg><rect x="1.500" y="1" width="13" height="14" rx="1.500" fill="#f4f4f4" /><path d="M1.500 1.500h13v4h-13z" fill="#ed4b45" /><text x="8" y="13" textAnchor="middle" fontSize="8" fontFamily="Inter" fill="#333">14</text></Svg> },
  { running: true, icon: <Svg><path d="M1 4l11-3 3 11-11 3.500z" fill="#e9edf2" /><path d="M2.500 5l8.700-2.500 2.400 8.600L5 13.800z" fill="#3d7fc1" /><path d="M4 11l3-5 2 1 3-3-1 5-3 1-2 3z" fill="#d8c6a8" /><Badge /></Svg> },
  { icon: <Svg><path d="M1 2l7-1 2 6-7 2z" fill="#35b7aa" /><path d="M9 1h4l2 8-4 1z" fill="#e7b52c" /><path d="M3 9l8-2 3 7-8 1z" fill="#d92a62" /><path d="M1 4l3-1 3 12-4-1z" fill="#68c7a7" /><rect x="4.500" y="4.500" width="7" height="7" rx="1" fill="#f4f4f4" /><text x="8" y="11" textAnchor="middle" fontSize="8" fontWeight="bold" fontFamily="Inter" fill="#3a2038">S</text></Svg> },
  { icon: <Svg><circle cx="8" cy="8" r="7" fill="#f1f1f1" />{petals.map((c, i) => <ellipse key={c} cx="8" cy="4.600" rx="1.900" ry="2.700" fill={c} opacity=".9" transform={`rotate(${i * 45} 8 8)`} />)}</Svg> },
  { running: true, icon: <Svg><circle cx="8" cy="8" r="7" fill="#f3cc2f" /><path d="M8 8L2 4.200A7 7 0 0 1 14.500 5H8z" fill="#dd4b3e" /><path d="M2 4.200A7 7 0 0 0 8 15l3-5-3-2z" fill="#31a455" /><circle cx="8" cy="8" r="3.300" fill="white" /><circle cx="8" cy="8" r="2.500" fill="#4385ed" /><circle cx="13.500" cy="13" r="2.500" fill="#df4f43" /></Svg> },
  { icon: <Svg><circle cx="8" cy="8" r="6.800" fill="#f7f4fa" stroke="#dcbbe8" /><path d="M6 11V4.500l5-1V10" fill="none" stroke="#ef4d88" strokeWidth="1.200" /><circle cx="5" cy="11" r="1.500" fill="#4e8cee" /><circle cx="10" cy="10" r="1.500" fill="#b95be0" /></Svg> },
  { running: true, icon: <Tile label="Ai" className="border-[#b95f18] bg-[#291708] text-[#f68b21]" /> },
  { icon: <Tile label="Ps" className="border-[#168da4] bg-[#062b36] text-[#24bddc]" /> },
  { icon: <Tile label="Id" className="border-[#a52863] bg-[#32061f] text-[#ed3984]" /> },
  { icon: <Tile label="Xd" className="border-[#b51d8d] bg-[#35052c] text-[#ee32c1]" /> },
  { running: true, icon: <Svg><circle cx="8" cy="8" r="7" fill="#57b581" stroke="#a2d8b9" /><g fill="none" stroke="#daf1e3" strokeWidth=".6"><ellipse cx="8" cy="8" rx="2" ry="5" /><ellipse cx="8" cy="8" rx="2" ry="5" transform="rotate(60 8 8)" /><ellipse cx="8" cy="8" rx="2" ry="5" transform="rotate(120 8 8)" /></g></Svg> },
  { icon: <Svg><rect x="1" y="1" width="14" height="14" rx="1" fill="#9ba0a3" /><circle cx="8" cy="8" r="5" fill="#555" stroke="#303030" strokeWidth="1.500" strokeDasharray="1.500 .6" /><circle cx="8" cy="8" r="3" fill="#777" stroke="#ccc" /><path d="M8 8V5M8 8l2.700 1.500M8 8L5.300 9.500" stroke="#ccc" /></Svg> },
  { icon: <Svg><circle cx="8" cy="8" r="7" fill="#238bdc" stroke="#82bceb" /><path d="M4.500 12L9 4M7 4l4.500 8M3.500 9.500h9" stroke="white" strokeWidth="1.200" /><Badge /></Svg> },
  { running: true, icon: <Svg><rect x="1" y="2" width="14" height="12" rx="1" fill="#191919" stroke="#555" /><path d="M3 4.500l2 1-2 1M6 7.500h2" fill="none" stroke="#ccc" strokeWidth=".8" /></Svg> },
  { icon: <Svg><rect x="0" y="0" width="16" height="16" fill="#e8edf0" stroke="#a3cce2" /><text x="8.500" y="12.500" textAnchor="middle" fontSize="13" fontWeight="bold" fontFamily="Inter" fill="#e57e20">F</text><path d="M8 14.300h6" stroke="#88bbdd" /></Svg> },
  { running: true, icon: <Svg><path d="M1 4l9-1 1 11H1z" fill="#8b8b8b" /><circle cx="6" cy="7" r="3" fill="#c5c5c5" /><path d="M4 9l4-4" stroke="#444" strokeWidth="1.300" /><path d="M12.500 9c3-4 2.500-9-2-7" fill="none" stroke="#5a5a5a" strokeWidth="1.200" /><path d="M3 11h6v3H3z" fill="#b8b8b8" /></Svg> },
  { running: true, icon: <Svg><path d="M7 0h2l4 13H3z" fill="#ef811c" /><path d="M5.700 4h4.600l.9 3H4.800zM4 9.500h8l.7 2H3.300z" fill="#eee" /><path d="M2 12h12l1.500 3.500H.5z" fill="#f18d20" /></Svg> },
  { running: true, icon: <Svg><path d="M2 2l12-1-1 14-10 .5z" fill="#85898d" /><path d="M3.500 3l9-.7-.8 11.500-8 .4z" fill="#6c7074" /><text x="8" y="12" textAnchor="middle" fontSize="11" fontStyle="italic" fontFamily="Liberation Serif" fill="#ddd">F</text></Svg> },
];

function Folder({ letter }: { letter: string }) {
  return <Svg><path d="M0 2h6l1 1.500h9V14H0z" fill="#5cafd9" /><path d="M0 4.500h16V14H0z" fill="#79c9ec" /><text x="8" y="12.200" textAnchor="middle" fontSize="8" fontFamily="Inter" fill="#4797bf">{letter}</text></Svg>;
}

function Dock() {
  return (
    <footer className="flex h-[22px] justify-center bg-linear-to-b from-[#222] to-[#2b2b2b]">
      <div className="flex h-full w-[436px] items-center bg-[#252525] pl-[0.500px]">
        {dockItems.map((d, i) => (
          <div key={i} className="flex h-full w-[17.800px] shrink-0 flex-col items-center pt-[1.500px]">
            <div className="flex h-[17px] items-center">{d.icon}</div>
            {d.running && <i className="mt-[1px] size-[1.500px] rounded-full bg-[#ccc]" />}
          </div>
        ))}
        <i className="ml-[3px] mr-[2px] h-4 w-px bg-[#444]" />
        <div className="flex w-[18px] justify-center pb-[2px]"><Folder letter="A" /></div>
        <div className="flex h-full w-[18px] flex-col items-center pt-[2px]"><div className="h-[17px]"><Folder letter="O" /></div><i className="mt-px h-[1px] w-[16px] bg-[#bbb]" /></div>
        <div className="flex w-[18px] justify-center pb-[2px]"><Svg><path d="M2 2h12l-1.500 13h-9z" fill="#ccc" /><ellipse cx="8" cy="2" rx="6" ry="1.200" fill="#eee" /><path d="M5 4l.5 10M8 4v10M11 4l-.5 10" stroke="#ddd" /></Svg></div>
      </div>
    </footer>
  );
}

export default function App() {
  return (
    <div className="relative flex h-[500px] w-[800px] flex-col overflow-hidden bg-[#222] leading-none">
      <MenuBar />
      <AppBar />
      <ControlBar />
      <div className="h-px bg-[#383838]" />
      <main className="flex h-[426px]">
        <ToolPanel />
        <div className="flex w-[737px] shrink-0 flex-col">
          <div className={`flex h-[15px] bg-[#393939] text-[6.300px] font-bold text-[#dcdcdc] ${ui}`}>
            <div className="flex w-[140px] items-center whitespace-nowrap bg-[#484848] pl-[4px] tracking-[-0.21px]"><span className="mr-[5px] text-[8px] font-normal">×</span>testes laser 1.ai* @ 100% (CMYK/Preview)</div>
          </div>
          <div className="flex h-[401px]">
            <Artwork />
            <div className="flex w-[10px] flex-col items-center bg-[#424242] pt-[2px]">
              <Icon name="down" className="size-[7px] rotate-180 text-[#888]" />
              <i className="mt-[186px] h-[14px] w-[8px] rounded-full bg-[#5c5c5c]" />
            </div>
          </div>
          <StatusBar />
        </div>
        <IconDock />
      </main>
      <Dock />
      <AlignPanel />
    </div>
  );
}
